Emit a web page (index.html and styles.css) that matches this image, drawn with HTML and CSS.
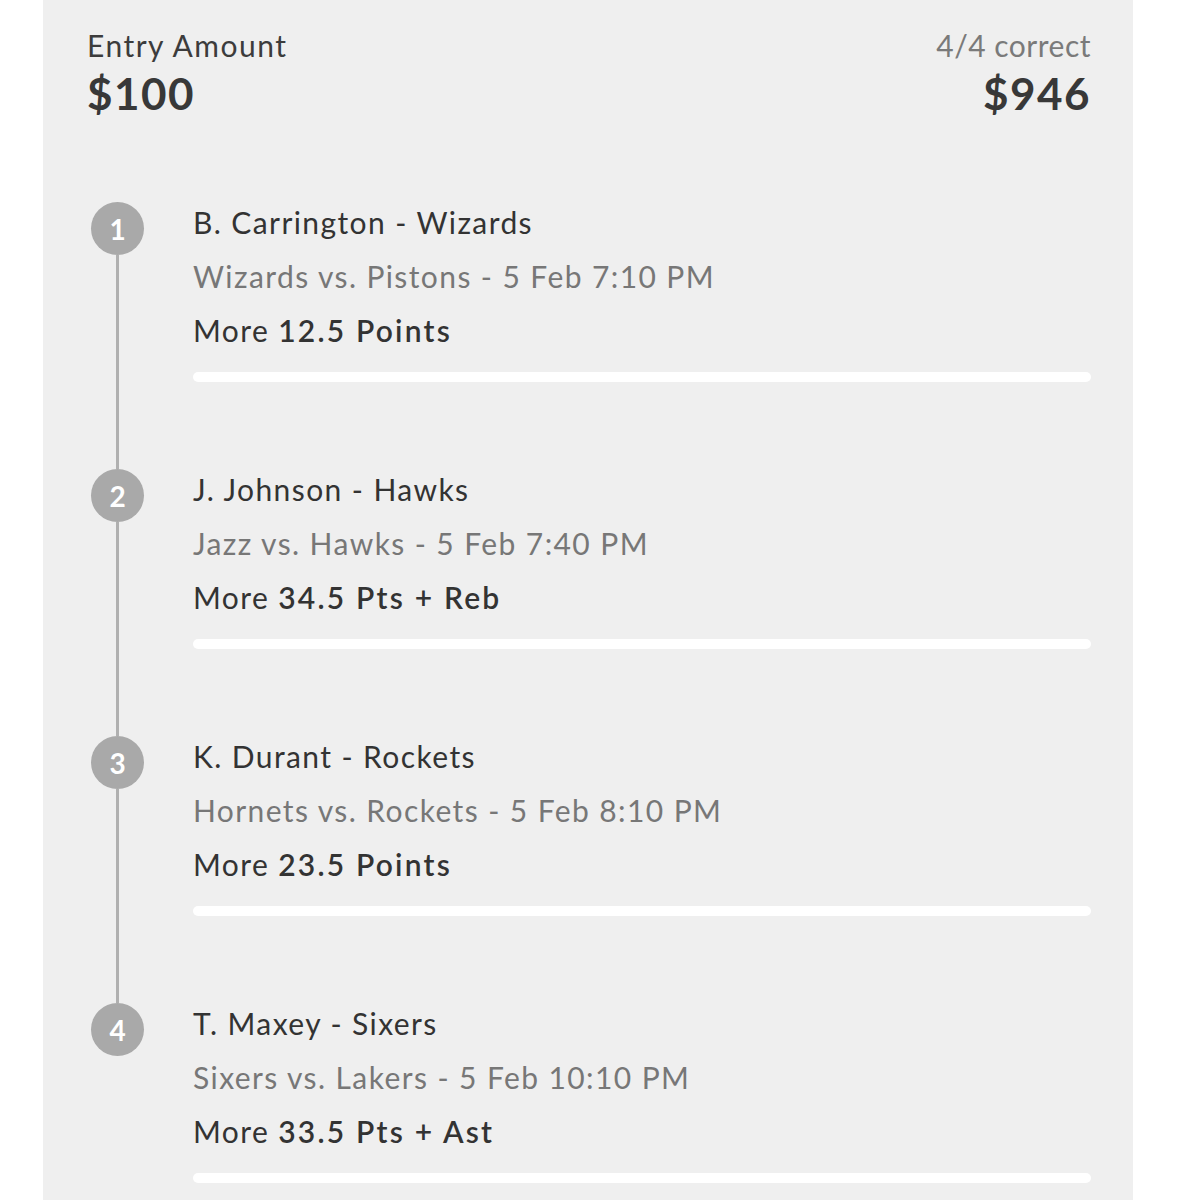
FILE: index.html
```html
<!DOCTYPE html>
<html>
<head>
<meta charset="utf-8">
<link rel="stylesheet" href="styles.css">
</head>
<body>
<div class="panel">
  <div class="header">
    <div class="col">
      <div class="label">Entry Amount</div>
      <div class="amount">$100</div>
    </div>
    <div class="col right">
      <div class="label muted">4/4 correct</div>
      <div class="amount">$946</div>
    </div>
  </div>
  <div class="picks">
    <div class="pick">
      <div class="marker"><div class="dot">1</div><div class="line"></div></div>
      <div class="info">
        <div class="title">B. Carrington - Wizards</div>
        <div class="sub">Wizards vs. Pistons - 5 Feb 7:10 PM</div>
        <div class="line-pick">More <b>12.5 Points</b></div>
        <div class="bar"></div>
      </div>
    </div>
    <div class="pick">
      <div class="marker"><div class="dot">2</div><div class="line"></div></div>
      <div class="info">
        <div class="title">J. Johnson - Hawks</div>
        <div class="sub">Jazz vs. Hawks - 5 Feb 7:40 PM</div>
        <div class="line-pick">More <b>34.5 Pts + Reb</b></div>
        <div class="bar"></div>
      </div>
    </div>
    <div class="pick">
      <div class="marker"><div class="dot">3</div><div class="line"></div></div>
      <div class="info">
        <div class="title">K. Durant - Rockets</div>
        <div class="sub">Hornets vs. Rockets - 5 Feb 8:10 PM</div>
        <div class="line-pick">More <b>23.5 Points</b></div>
        <div class="bar"></div>
      </div>
    </div>
    <div class="pick last">
      <div class="marker"><div class="dot">4</div></div>
      <div class="info">
        <div class="title">T. Maxey - Sixers</div>
        <div class="sub">Sixers vs. Lakers - 5 Feb 10:10 PM</div>
        <div class="line-pick">More <b>33.5 Pts + Ast</b></div>
        <div class="bar"></div>
      </div>
    </div>
  </div>
</div>
</body>
</html>
```
FILE: styles.css
```css
html, body {
  margin: 0;
  padding: 0;
  background: #ffffff;
  height: 1200px;
  overflow: hidden;
}
body {
  font-family: Lato, "Open Sans", sans-serif;
  color: #333333;
}
.panel {
  margin-left: 43px;
  width: 1090px;
  min-height: 1200px;
  box-sizing: border-box;
  background: #efefef;
  padding: 27px 42px 0 44px;
}
.header {
  display: flex;
  justify-content: space-between;
}
.col {
  display: flex;
  flex-direction: column;
}
.col.right {
  align-items: flex-end;
}
.label {
  font-size: 30px;
  line-height: 36px;
  letter-spacing: 1.5px;
  color: #3c3c3c;
}
.label.muted {
  color: #7a7a7a;
  letter-spacing: 0.5px;
}
.amount {
  margin-top: 3px;
  font-size: 44px;
  line-height: 55px;
  font-weight: 700;
  letter-spacing: 1.5px;
  color: #383838;
}
.picks {
  margin-top: 74px;
  display: flex;
  flex-direction: column;
}
.pick {
  display: grid;
  grid-template-columns: 106px 1fr;
  height: 267px;
}
.marker {
  display: flex;
  flex-direction: column;
  align-items: center;
  width: 53px;
  margin-left: 4px;
  padding-top: 7px;
}
.dot {
  width: 53px;
  height: 53px;
  flex: none;
  border-radius: 50%;
  background: #a9a9a9;
  color: #ffffff;
  font-weight: 700;
  font-size: 28px;
  display: flex;
  align-items: center;
  justify-content: center;
}
.line {
  flex: 1;
  width: 3px;
  background: #b0b0b0;
  margin-bottom: -7px;
}
.info {
  display: flex;
  flex-direction: column;
}
.title, .sub, .line-pick {
  font-size: 30px;
  line-height: 54px;
  letter-spacing: 1.4px;
  white-space: nowrap;
}
.title { color: #333333; }
.sub { color: #777777; }
.line-pick { color: #333333; }
.line-pick b { font-weight: 600; letter-spacing: 2.2px; }
.bar {
  margin-top: 15px;
  height: 10px;
  border-radius: 5px;
  background: #ffffff;
}
```
